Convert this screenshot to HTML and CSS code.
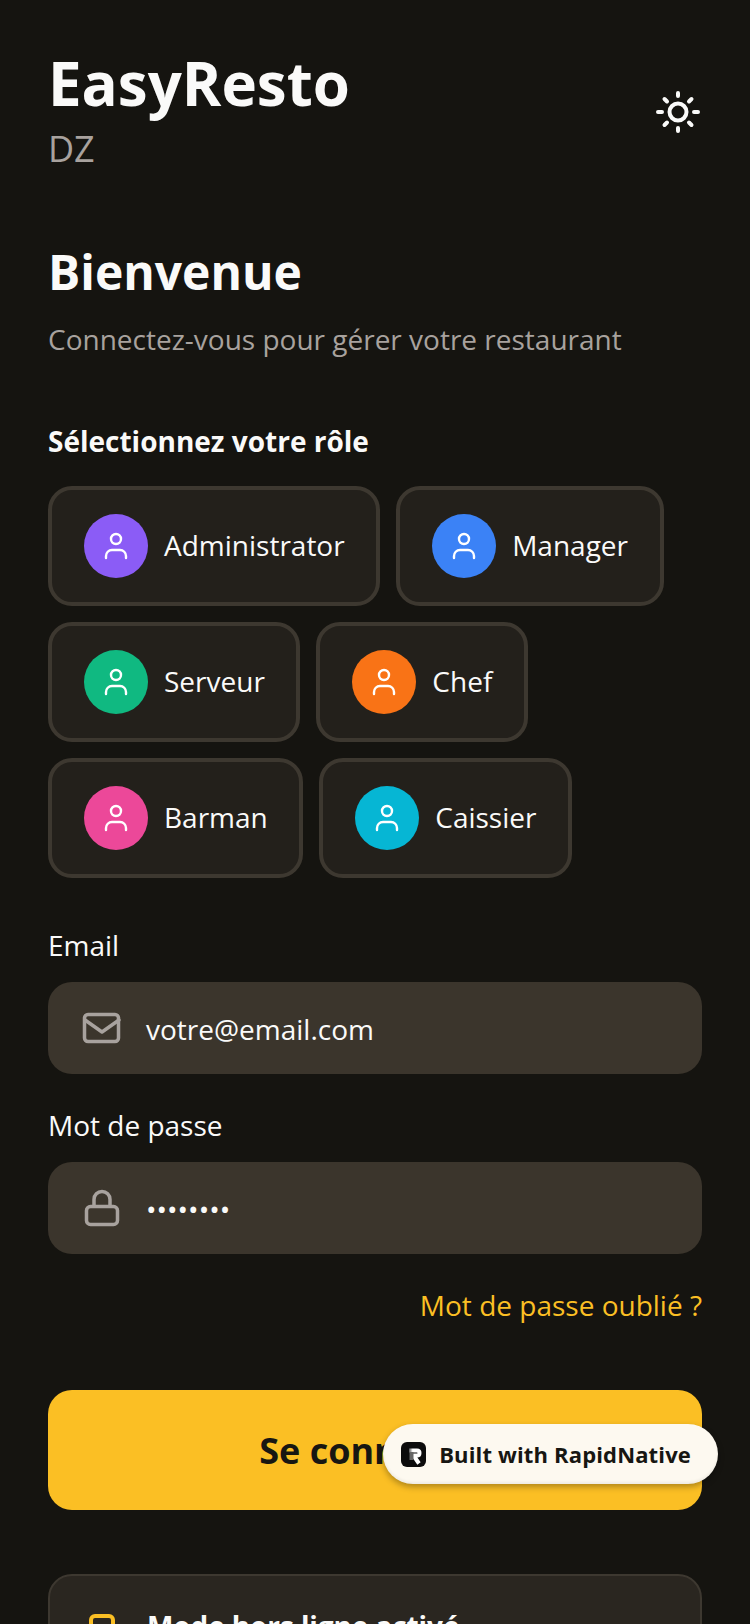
FILE: index.html
```html
<!DOCTYPE html>
<html lang="fr">
<head>
  <meta charset="UTF-8" />
  <meta name="viewport" content="width=device-width, initial-scale=1.0"/>
  <title>EasyResto</title>
  <link rel="stylesheet" href="styles.css">
</head>
<body>
  <div class="screen">
    <header class="top">
      <div>
        <h1>EasyResto</h1>
        <p class="country">DZ</p>
      </div>
      <svg class="sun" viewBox="0 0 48 48" fill="none" stroke="#fafaf9" stroke-width="4" stroke-linecap="round">
        <circle cx="24" cy="24" r="8.500"/>
        <path d="M24 5v3M24 40v3M4 24h4M40 24h4M10.500 11l2.500 2.500M35 34.500l2.500 2.500M10.500 37l2.500-2.500M35 13.500l2.500-2.500"/>
      </svg>
    </header>

    <h2>Bienvenue</h2>
    <p class="sub">Connectez-vous pour gérer votre restaurant</p>

    <h3>Sélectionnez votre rôle</h3>
    <div class="roles">
      <div class="role">
        <span class="avatar purple"><svg viewBox="0 0 32 32"><circle cx="16" cy="9" r="5"/><path d="M6 28v-2a6 6 0 0 1 6-6h8a6 6 0 0 1 6 6v2"/></svg></span>
        Administrator
      </div>
      <div class="role">
        <span class="avatar blue"><svg viewBox="0 0 32 32"><circle cx="16" cy="9" r="5"/><path d="M6 28v-2a6 6 0 0 1 6-6h8a6 6 0 0 1 6 6v2"/></svg></span>
        Manager
      </div>
      <div class="role">
        <span class="avatar green"><svg viewBox="0 0 32 32"><circle cx="16" cy="9" r="5"/><path d="M6 28v-2a6 6 0 0 1 6-6h8a6 6 0 0 1 6 6v2"/></svg></span>
        Serveur
      </div>
      <div class="role">
        <span class="avatar orange"><svg viewBox="0 0 32 32"><circle cx="16" cy="9" r="5"/><path d="M6 28v-2a6 6 0 0 1 6-6h8a6 6 0 0 1 6 6v2"/></svg></span>
        Chef
      </div>
      <div class="role">
        <span class="avatar pink"><svg viewBox="0 0 32 32"><circle cx="16" cy="9" r="5"/><path d="M6 28v-2a6 6 0 0 1 6-6h8a6 6 0 0 1 6 6v2"/></svg></span>
        Barman
      </div>
      <div class="role">
        <span class="avatar cyan"><svg viewBox="0 0 32 32"><circle cx="16" cy="9" r="5"/><path d="M6 28v-2a6 6 0 0 1 6-6h8a6 6 0 0 1 6 6v2"/></svg></span>
        Caissier
      </div>
    </div>

    <label class="field-label">Email</label>
    <div class="field">
      <svg class="field-icon" viewBox="0 0 40 40" fill="none" stroke="#a8a29e" stroke-width="3.500" stroke-linecap="round" stroke-linejoin="round">
        <rect x="2.500" y="6.500" width="34" height="27" rx="3.500"/>
        <path d="M3 12l17 12 17-12"/>
      </svg>
      <span>votre@email.com</span>
    </div>

    <label class="field-label">Mot de passe</label>
    <div class="field">
      <svg class="field-icon" viewBox="0 0 40 40" fill="none" stroke="#a8a29e" stroke-width="3.500" stroke-linecap="round" stroke-linejoin="round">
        <rect x="4.500" y="18.500" width="31" height="18" rx="4"/>
        <path d="M12 18v-6.500a8 8 0 0 1 16 0V18"/>
      </svg>
      <span>••••••••</span>
    </div>

    <a class="forgot">Mot de passe oublié ?</a>

    <button class="submit">Se connecter</button>

    <div class="offline">
      <span class="offline-icon"></span>
      <strong>Mode hors ligne activé</strong>
    </div>
  </div>

  <div class="built">
    <span class="built-logo">
      <svg viewBox="0 0 25 25" fill="none" stroke-width="4" stroke-linejoin="round">
        <defs>
          <linearGradient id="logoFade" x1="0" y1="0" x2="1" y2="0">
            <stop offset="0" stop-color="#555"/>
            <stop offset="0.35" stop-color="#fff"/>
          </linearGradient>
        </defs>
        <path stroke="url(#logoFade)" d="M8 8.500h8q2.500 0 2.500 2.500t-2.500 2.500h-3.500l5.500 8"/>
        <path stroke="#666" d="M10.500 10v8"/>
      </svg>
    </span>
    Built with RapidNative
  </div>
</body>
</html>
```

FILE: styles.css
```css
* {
  box-sizing: border-box;
}
html, body {
  margin: 0;
  height: 1624px;
  overflow: hidden;
}
body {
  position: relative;
  background: #151410;
  font-family: "Open Sans", sans-serif;
  color: #fafaf9;
}
.screen {
  padding: 42px 48px 0;
}
.top {
  display: flex;
  justify-content: space-between;
  align-items: center;
}
h1 {
  margin: 0;
  font-size: 60px;
  line-height: 82px;
  font-weight: 700;
}
.country {
  margin: 0;
  font-size: 36px;
  line-height: 49px;
  color: #a8a29e;
}
.sun {
  width: 48px;
  height: 48px;
  margin-top: 9px;
}
h2 {
  margin: 66px 0 0;
  font-size: 48px;
  line-height: 65px;
  font-weight: 700;
}
.sub {
  margin: 15px 0 0;
  font-size: 28px;
  line-height: 40px;
  color: #a8a29e;
}
h3 {
  margin: 62px 0 0;
  font-size: 28px;
  line-height: 40px;
  font-weight: 700;
}
.roles {
  display: flex;
  flex-wrap: wrap;
  gap: 16px;
  margin-top: 25px;
}
.role {
  display: flex;
  align-items: center;
  gap: 16px;
  height: 120px;
  padding: 0 31.500px 2px 32px;
  background: #23201b;
  border: 4px solid #3d3830;
  border-radius: 24px;
  font-size: 28px;
}
.avatar {
  display: flex;
  align-items: center;
  justify-content: center;
  width: 64px;
  height: 64px;
  margin-top: 2px;
  border-radius: 50%;
}
.avatar svg {
  width: 32px;
  height: 32px;
  fill: none;
  stroke: #fff;
  stroke-width: 2.400;
  stroke-linecap: round;
}
.purple { background: #8b5cf6; }
.blue { background: #3b82f6; }
.green { background: #10b981; }
.orange { background: #f97316; }
.pink { background: #ec4899; }
.cyan { background: #06b6d4; }
.field-label {
  display: block;
  margin-top: 47px;
  font-size: 28px;
  line-height: 40px;
}
.field + .field-label {
  margin-top: 31px;
}
.field {
  display: flex;
  align-items: center;
  gap: 24px;
  height: 92px;
  margin-top: 17px;
  padding: 0 34px;
  background: #3b352c;
  border-radius: 24px;
  font-size: 28px;
}
.field span {
  position: relative;
  top: 1px;
}
.field-icon {
  width: 40px;
  height: 40px;
}
.forgot {
  display: block;
  margin-top: 31px;
  text-align: right;
  font-size: 28px;
  line-height: 40px;
  color: #fbbf24;
}
.submit {
  display: block;
  width: 100%;
  height: 120px;
  margin-top: 65px;
  background: #fbbf24;
  border: none;
  border-radius: 24px;
  font-family: inherit;
  font-size: 36px;
  font-weight: 700;
  color: #171612;
}
.offline {
  display: flex;
  gap: 32px;
  margin-top: 64px;
  padding: 31px 39px;
  height: 200px;
  background: #2a2620;
  border: 2px solid #3d3830;
  border-radius: 24px;
  font-size: 28px;
}
.offline strong {
  letter-spacing: -0.1px;
}
.offline-icon {
  width: 26px;
  height: 26px;
  margin-top: 7px;
  border: 4px solid #fbbf24;
  border-radius: 6px;
}
.built {
  position: absolute;
  right: 32px;
  top: 1424px;
  display: flex;
  align-items: center;
  gap: 13px;
  height: 60px;
  padding: 0 27px 0 18px;
  background: #fdf9f0;
  border-radius: 30px;
  box-shadow: 0 3px 6px rgba(0, 0, 0, 0.3), inset 0 -2px 3px rgba(0, 0, 0, 0.06);
  font-size: 22px;
  font-weight: 700;
  letter-spacing: 0.15px;
  color: #171612;
}
.built-logo {
  display: flex;
  width: 25px;
  height: 25px;
  background: #0c0c0c;
  border-radius: 6px;
}
```
